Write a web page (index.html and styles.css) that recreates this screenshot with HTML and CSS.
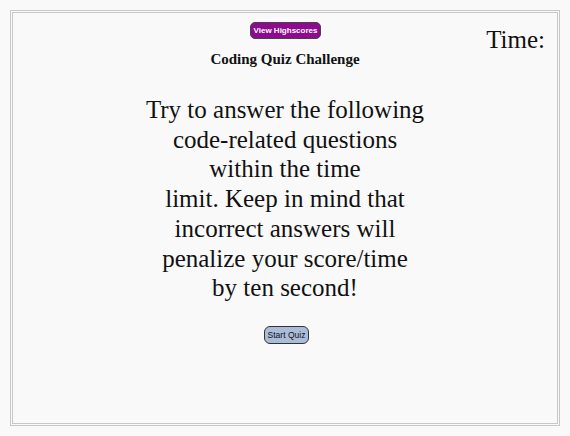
FILE: index.html
```html
<!DOCTYPE html>
<html>
<head>
<meta charset="utf-8">
<link rel="stylesheet" href="styles.css">
</head>
<body>
<div class="frame">
  <header class="top">
    <button class="hs-btn">View Highscores</button>
    <div class="timer">Time:</div>
  </header>
  <h1 class="title">Coding Quiz Challenge</h1>
  <p class="intro">Try to answer the following<br>code-related questions<br>within the time<br>limit. Keep in mind that<br>incorrect answers will<br>penalize your score/time<br>by ten second!</p>
  <div class="start-wrap"><button class="start-btn">Start Quiz</button></div>
</div>
</body>
</html>
```
FILE: styles.css
```css
html, body {
  margin: 0;
  padding: 0;
  background: #f9f9f9;
}
body {
  padding: 10px;
  font-family: "Liberation Serif", "Times New Roman", serif;
  color: #111;
}
.frame {
  box-sizing: border-box;
  width: 550px;
  height: 416px;
  border: 3px double #c8c8c8;
  position: relative;
}
.top {
  position: relative;
  display: flex;
  justify-content: center;
  padding-top: 9px;
}
.hs-btn {
  font-family: "Liberation Sans", Arial, sans-serif;
  font-size: 8px;
  font-weight: bold;
  color: #fff;
  background: #8e0a8e;
  border: 1px solid #444;
  border-radius: 5px;
  height: 17px;
  padding: 0 3px;
  margin-left: 1px;
}
.timer {
  position: absolute;
  right: 12px;
  top: 13px;
  font-size: 25px;
}
.title {
  font-size: 15px;
  font-weight: bold;
  text-align: center;
  margin: 12px 0 0;
}
.intro {
  font-size: 25px;
  line-height: 29.7px;
  text-align: center;
  margin: 27px 0 0;
}
.start-wrap {
  display: flex;
  justify-content: center;
  margin-top: 23px;
}
.start-btn {
  font-family: "Liberation Sans", Arial, sans-serif;
  font-size: 8.5px;
  color: #111;
  background: #abbcd9;
  border: 1px solid #333;
  border-radius: 6px;
  height: 18px;
  padding: 0 3px;
  margin-left: 3px;
}
```
